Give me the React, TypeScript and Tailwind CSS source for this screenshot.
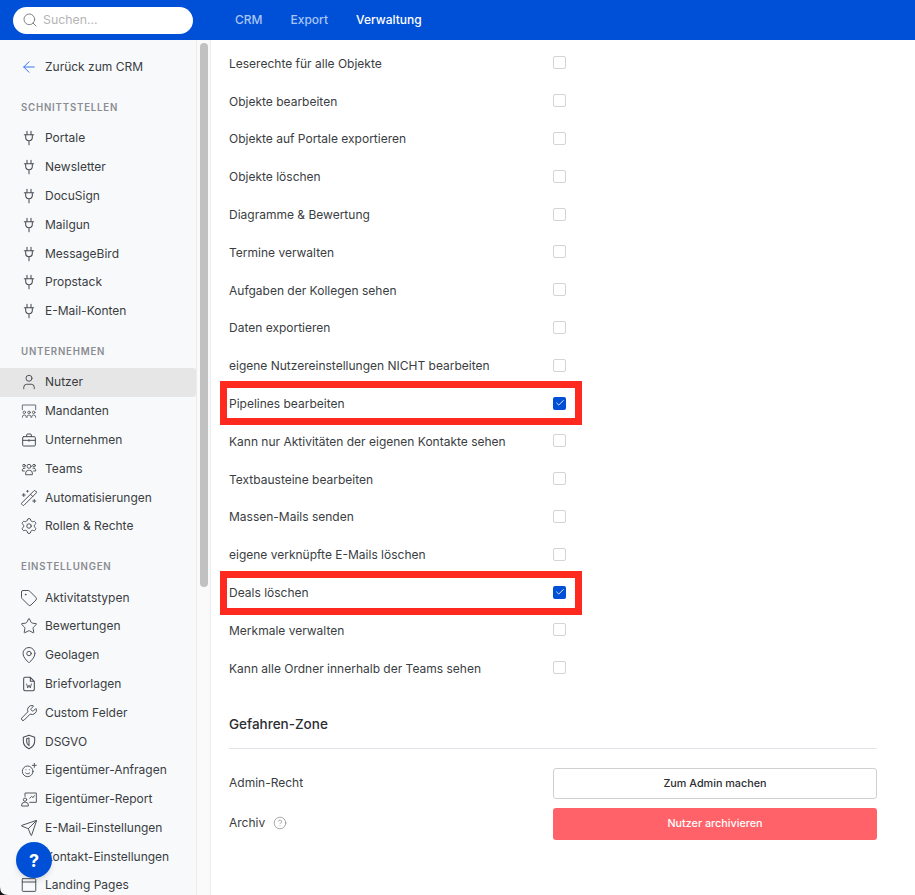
import {
  ArrowLeft, Search, User, WandSparkles, Settings, Tag, Star, MapPin, Wrench, Send, Contact, Check, CircleHelp,
} from "lucide-react";
import type { ReactNode } from "react";

const ico = { width: 16, height: 16, viewBox: "0 0 24 24", fill: "none", stroke: "currentColor", strokeWidth: 1.6, strokeLinecap: "round" as const, strokeLinejoin: "round" as const };

function PlugIcon() {
  return (
    <svg {...ico}>
      <path d="M9 2v5M15 2v5M5 7h14M7 7v4a5 5 0 0 0 10 0V7M12 16v6" />
    </svg>
  );
}

function MandantenIcon() {
  return (
    <svg {...ico} strokeWidth={1.2}>
      <path d="M2 10V3h20v7" />
      <circle cx="5" cy="14" r="1.900" />
      <circle cx="12" cy="14" r="1.900" />
      <circle cx="19" cy="14" r="1.900" />
      <path d="M2 21.500v-.5a3 3 0 0 1 6 0v.5M9 21.500v-.5a3 3 0 0 1 6 0v.5M16 21.500v-.5a3 3 0 0 1 6 0v.5" />
    </svg>
  );
}

function BriefcaseIcon() {
  return (
    <svg {...ico} strokeWidth={1.5}>
      <rect x="2.500" y="7" width="19" height="14" rx="1.500" />
      <path d="M8.500 7V4.500a1.500 1.500 0 0 1 1.500-1.500h4a1.500 1.500 0 0 1 1.500 1.500V7M2.500 12.500h19M12 11.500v2.500" />
    </svg>
  );
}

function TeamsIcon() {
  return (
    <svg {...ico} strokeWidth={1.4}>
      <circle cx="12" cy="8" r="3" />
      <circle cx="4.500" cy="7" r="2" />
      <circle cx="19.500" cy="7" r="2" />
      <path d="M7 20v-2a4 4 0 0 1 4-4h2a4 4 0 0 1 4 4v2zM5 15H2v-2a3 3 0 0 1 3-2h1M19 15h3v-2a3 3 0 0 0-3-2h-1" />
    </svg>
  );
}

function WordFileIcon() {
  return (
    <svg {...ico}>
      <path d="M14 2H6a2 2 0 0 0-2 2v16a2 2 0 0 0 2 2h12a2 2 0 0 0 2-2V8zM14 2v6h6" />
      <path d="M8.500 12l1.500 6 2-4.500 2 4.500 1.500-6" strokeWidth={1.3} />
    </svg>
  );
}

function ShieldIcon() {
  return (
    <svg {...ico}>
      <path d="M12 2l8.500 3v6c0 5.500-3.500 9-8.500 11-5-2-8.500-5.500-8.500-11V5z" />
      <path d="M12 6l-3.500 1.300v4c0 3 1.500 5 3.500 6.200z" />
    </svg>
  );
}

function SmilePlusIcon() {
  return (
    <svg {...ico} strokeWidth={1.4}>
      <circle cx="10" cy="14" r="8" />
      <path d="M7 16.500c1.500 1.700 4.500 1.700 6 0M7.500 11.500h.01M12.500 11.500h.01M20 2v6M17 5h6" />
    </svg>
  );
}

function ReportIcon() {
  return (
    <svg {...ico} strokeWidth={1.4}>
      <path d="M6 8V3h17v14H13" />
      <circle cx="6" cy="13" r="2.500" />
      <path d="M1 22v-1a4 4 0 0 1 4-4h2a4 4 0 0 1 4 4v1zM13 11l3-3 2 2 2-3" />
    </svg>
  );
}

function WindowIcon() {
  return (
    <svg {...ico} width={18} height={18} strokeWidth={1.3} className="-ml-px">
      <rect x="3" y="3.500" width="18" height="17" rx="1" />
      <path d="M3 8h18" />
    </svg>
  );
}

type NavItem = { label: string; icon: ReactNode; active?: boolean };

const lucideProps = { size: 18, strokeWidth: 1.3, className: "-ml-px" };

const schnittstellen: NavItem[] = ["Portale", "Newsletter", "DocuSign", "Mailgun", "MessageBird", "Propstack", "E-Mail-Konten"].map((label) => ({ label, icon: <PlugIcon /> }));

const unternehmen: NavItem[] = [
  { label: "Nutzer", icon: <User {...lucideProps} />, active: true },
  { label: "Mandanten", icon: <MandantenIcon /> },
  { label: "Unternehmen", icon: <BriefcaseIcon /> },
  { label: "Teams", icon: <TeamsIcon /> },
  { label: "Automatisierungen", icon: <WandSparkles {...lucideProps} /> },
  { label: "Rollen & Rechte", icon: <Settings {...lucideProps} /> },
];

const einstellungen: NavItem[] = [
  { label: "Aktivitatstypen", icon: <Tag {...lucideProps} /> },
  { label: "Bewertungen", icon: <Star {...lucideProps} /> },
  { label: "Geolagen", icon: <MapPin {...lucideProps} /> },
  { label: "Briefvorlagen", icon: <WordFileIcon /> },
  { label: "Custom Felder", icon: <Wrench {...lucideProps} /> },
  { label: "DSGVO", icon: <ShieldIcon /> },
  { label: "Eigentümer-Anfragen", icon: <SmilePlusIcon /> },
  { label: "Eigentümer-Report", icon: <ReportIcon /> },
  { label: "E-Mail-Einstellungen", icon: <Send {...lucideProps} /> },
  { label: "Kontakt-Einstellungen", icon: <Contact {...lucideProps} /> },
  { label: "Landing Pages", icon: <WindowIcon /> },
];

const rights = [
  { label: "Leserechte für alle Objekte" },
  { label: "Objekte bearbeiten" },
  { label: "Objekte auf Portale exportieren" },
  { label: "Objekte löschen" },
  { label: "Diagramme & Bewertung" },
  { label: "Termine verwalten" },
  { label: "Aufgaben der Kollegen sehen" },
  { label: "Daten exportieren" },
  { label: "eigene Nutzereinstellungen NICHT bearbeiten" },
  { label: "Pipelines bearbeiten", checked: true },
  { label: "Kann nur Aktivitäten der eigenen Kontakte sehen" },
  { label: "Textbausteine bearbeiten" },
  { label: "Massen-Mails senden" },
  { label: "eigene verknüpfte E-Mails löschen" },
  { label: "Deals löschen", checked: true },
  { label: "Merkmale verwalten" },
  { label: "Kann alle Ordner innerhalb der Teams sehen" },
];

function NavSection({ title, items }: { title: string; items: NavItem[] }) {
  return (
    <div className="mb-[11px]">
      <div className="h-[31.4px] pl-[21px] flex items-center text-[9.7px] font-semibold tracking-[0.08em] uppercase text-[#8a8c91]">{title}</div>
      {items.map((item) => (
        <div
          key={item.label}
          className={`h-[28.8px] flex items-center pl-[21px] text-[12px] text-[#3a3d42] rounded-r-[3px] ${item.active ? "bg-[#e6e6e6]" : ""}`}
        >
          <span className="w-[24px] shrink-0 flex items-center text-[#4b4e54]">{item.icon}</span>
          <span className="whitespace-nowrap">{item.label}</span>
        </div>
      ))}
    </div>
  );
}

export default function App() {
  return (
    <div className="relative h-[895px] w-[915px] overflow-hidden bg-white font-['Inter',sans-serif]">
      <header className="h-10 bg-[#0050d7] flex items-center">
        <div className="ml-[13px] h-[27px] w-[180px] bg-white rounded-full flex items-center pl-[9px] text-[12.3px] text-[#b5b5b5]">
          <Search size={16} strokeWidth={1.4} className="text-[#777] mr-[5px]" />
          Suchen...
        </div>
        <nav className="ml-[42px] flex gap-[28px] text-[12px] font-medium text-[#a9c5f5]">
          <span>CRM</span>
          <span>Export</span>
          <span className="text-white">Verwaltung</span>
        </nav>
      </header>

      <div className="flex h-[855px]">
        <aside className="w-[197px] shrink-0 bg-[#f8f9fb] border-r border-[#ececef] overflow-hidden">
          <div className="h-[12.6px]" />
          <div className="h-[28px] flex items-center pl-[21px] text-[12px] text-[#3a3d42]">
            <span className="w-[24px] flex items-center">
              <ArrowLeft size={18} strokeWidth={1.3} className="-ml-px text-[#2f74ea]" />
            </span>
            Zurück zum CRM
          </div>
          <div className="h-[12px]" />
          <NavSection title="Schnittstellen" items={schnittstellen} />
          <NavSection title="Unternehmen" items={unternehmen} />
          <NavSection title="Einstellungen" items={einstellungen} />
        </aside>

        <div className="w-[14px] shrink-0 bg-[#fafafa] border-r border-[#ececef] pt-[3px] pl-[3px]">
          <div className="h-[544px] w-[8px] rounded-full bg-[#c1c1c1]" />
        </div>

        <main className="flex-1 pl-[18px] pr-[38px] pt-[4px]">
          <div>
            {rights.map((r) => (
              <div key={r.label} className="relative h-[37.8px] flex items-center text-[12px] text-[#3a3d42]">
                <span className="w-[324px] pt-[2px]">{r.label}</span>
                <span className={`h-[13px] w-[13px] rounded-[2px] flex items-center justify-center ${r.checked ? "bg-[#0050d7]" : "bg-white border border-[#d4d4d8]"}`}>
                  {r.checked && <Check size={10} strokeWidth={2} className="text-white" />}
                </span>
                {r.checked && (
                  <span className={`absolute left-[-9px] h-[44px] w-[362px] border-[7px] border-[#ff2a1f] ${r.label === "Deals löschen" ? "top-[-2.2px]" : "top-[-3.2px]"}`} />
                )}
              </div>
            ))}
          </div>

          <h2 className="mt-[25.700px] h-[24px] text-[13.5px] font-medium text-[#2c2e33] flex items-center">Gefahren-Zone</h2>
          <hr className="mt-[12px] border-[#e3e3ea]" />
          <div className="mt-[19px] flex items-center h-[31px] text-[12px] text-[#3a3d42]">
            <span className="w-[324px] pb-[2px]">Admin-Recht</span>
            <button className="flex-1 h-[31px] bg-white border border-[#d0d0d4] rounded-[3px] text-[10.8px] font-medium text-[#2c2e33]">Zum Admin machen</button>
          </div>
          <div className="mt-[9px] flex items-center h-[32px] text-[12px] text-[#3a3d42]">
            <span className="w-[324px] flex items-center gap-[8px] pb-[2px]">
              Archiv
              <CircleHelp size={14} strokeWidth={1.1} className="text-[#7a7c81]" />
            </span>
            <button className="flex-1 h-[32px] bg-[#ff6369] rounded-[3px] text-[10.8px] font-medium text-white">Nutzer archivieren</button>
          </div>
        </main>
      </div>

      <div className="absolute left-[16px] top-[842px] h-9 w-9 rounded-full bg-[#0050d7] shadow-md flex items-center justify-center text-white font-bold text-[18px]">?</div>

      {/* schwarze Fensterecke unten links */}
      <svg className="absolute left-0 bottom-0" width="8" height="8" viewBox="0 0 8 8">
        <path d="M0 0Q0 8 8 8H0Z" fill="#111" />
      </svg>
    </div>
  );
}
